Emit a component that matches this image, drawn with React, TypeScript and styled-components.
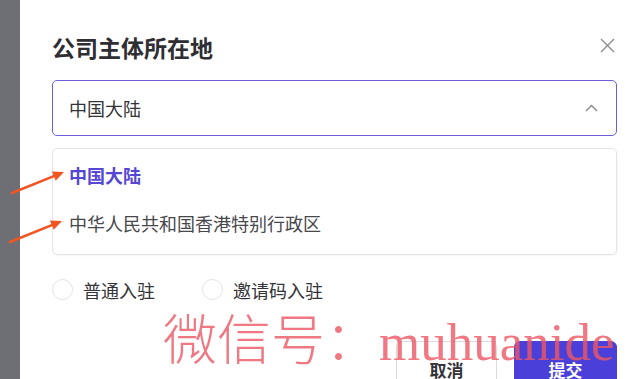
import React, { useState } from 'react';
import styled, { createGlobalStyle } from 'styled-components';

const GlobalStyle = createGlobalStyle`
  html, body {
    margin: 0;
    padding: 0;
    background: #ffffff;
    overflow: hidden;
  }
  * {
    box-sizing: border-box;
  }
`;

const Page = styled.div`
  position: relative;
  display: flex;
  width: 635px;
  height: 379px;
  overflow: hidden;
  font-family: "Noto Sans CJK SC", "Noto Sans", sans-serif;
`;

const Backdrop = styled.div`
  width: 20px;
  flex-shrink: 0;
  background: #6e6f75;
`;

const Dialog = styled.div`
  position: relative;
  flex: 1;
  background: #ffffff;
  padding: 32px 18px 0 32px;
  overflow: hidden;
`;

const Header = styled.div`
  display: flex;
  justify-content: space-between;
  align-items: center;
  height: 30px;
`;

const Title = styled.h2`
  margin: 0;
  font-size: 23px;
  line-height: 30px;
  font-weight: 600;
  color: #2e2e33;
`;

const CloseBtn = styled.span`
  display: flex;
  margin-right: 2px;
  margin-top: -4px;
  cursor: pointer;
`;

const Select = styled.div`
  margin-top: 18px;
  height: 56px;
  border: 1.5px solid #6d5fd8;
  border-radius: 5px;
  display: flex;
  align-items: center;
  justify-content: space-between;
  padding: 0 18px 0 16px;
  font-size: 18px;
  color: #333338;
`;

const Dropdown = styled.ul`
  list-style: none;
  margin: 12px 0 0;
  padding: 2px 0 7px;
  border: 1px solid #e4e4ec;
  border-radius: 5px;
  box-shadow: 1px 1px 2px rgba(0, 0, 0, 0.04);
`;

const Option = styled.li<{ $active?: boolean }>`
  height: 48px;
  display: flex;
  align-items: center;
  padding-left: 16px;
  font-size: 18px;
  font-weight: ${p => (p.$active ? 700 : 400)};
  color: ${p => (p.$active ? '#5546d4' : '#47474c')};
`;

const RadioRow = styled.div`
  margin-top: 24px;
  display: flex;
  align-items: center;
  gap: 47px;
`;

const RadioItem = styled.label`
  display: flex;
  align-items: center;
  gap: 10px;
  font-size: 18px;
  line-height: 20px;
  color: #333338;
`;

const RadioCircle = styled.span`
  width: 21px;
  height: 21px;
  border-radius: 50%;
  border: 1.5px solid #e2e2e6;
  background: #fff;
`;

const Footer = styled.div`
  margin-top: 41px;
  display: flex;
  justify-content: flex-end;
  gap: 17px;
`;

const Button = styled.button<{ $primary?: boolean }>`
  height: 46px;
  width: ${p => (p.$primary ? '103px' : '101px')};
  border-radius: 6px;
  border: 1px solid ${p => (p.$primary ? '#4a3fd8' : '#d9d9de')};
  background: ${p => (p.$primary ? '#4a3fd8' : '#ffffff')};
  color: ${p => (p.$primary ? '#ffffff' : '#333338')};
  font-family: "Noto Sans CJK SC", sans-serif;
  font-size: 17px;
  line-height: 24px;
  font-weight: 700;
  padding: 16px 0 0;
  display: flex;
  justify-content: center;
  align-items: flex-start;
`;

const Watermark = styled.div`
  position: absolute;
  left: 143px;
  top: 302px;
  white-space: nowrap;
  color: rgba(236, 86, 100, 0.8);
  font-size: 54px;
  line-height: 70px;
  pointer-events: none;
  display: flex;
  align-items: baseline;
`;

const WatermarkCn = styled.span`
  font-family: "Noto Sans CJK SC", sans-serif;
  font-weight: 200;
`;

const WatermarkEn = styled.span`
  font-family: "Liberation Serif", serif;
  font-weight: 400;
  font-size: 53px;
`;

const Arrows = styled.svg`
  position: absolute;
  left: 0;
  top: 0;
  pointer-events: none;
`;

function Arrow({ x1, y1, x2, y2 }: { x1: number; y1: number; x2: number; y2: number }) {
  const ang = Math.atan2(y2 - y1, x2 - x1);
  const len = 11;
  const w = 5;
  const bx = x2 - Math.cos(ang) * len;
  const by = y2 - Math.sin(ang) * len;
  const px = -Math.sin(ang) * w;
  const py = Math.cos(ang) * w;
  return (
    <g>
      <line x1={x1} y1={y1} x2={bx} y2={by} stroke="#f05522" strokeWidth={2.6} strokeLinecap="round" />
      <polygon points={`${x2},${y2} ${bx + px},${by + py} ${bx - px},${by - py}`} fill="#f05522" />
    </g>
  );
}

export default function App() {
  const [value] = useState('中国大陆');
  const options = ['中国大陆', '中华人民共和国香港特别行政区'];

  return (
    <Page>
      <GlobalStyle />
      <Backdrop />
      <Dialog>
        <Header>
          <Title>公司主体所在地</Title>
          <CloseBtn>
            <svg width="15" height="15" viewBox="0 0 15 15">
              <path d="M1 1 L14 14 M14 1 L1 14" stroke="#8c8c92" strokeWidth="1.4" fill="none" />
            </svg>
          </CloseBtn>
        </Header>
        <Select>
          <span>{value}</span>
          <svg width="13" height="8" viewBox="0 0 13 8">
            <path d="M1 7 L6.5 1.5 L12 7" stroke="#85858b" strokeWidth="1.4" fill="none" />
          </svg>
        </Select>
        <Dropdown>
          {options.map(o => (
            <Option key={o} $active={o === value}>
              {o}
            </Option>
          ))}
        </Dropdown>
        <RadioRow>
          <RadioItem>
            <RadioCircle />
            普通入驻
          </RadioItem>
          <RadioItem>
            <RadioCircle />
            邀请码入驻
          </RadioItem>
        </RadioRow>
        <Footer>
          <Button>取消</Button>
          <Button $primary>提交</Button>
        </Footer>
        <Watermark>
          <WatermarkCn>微信号：</WatermarkCn>
          <WatermarkEn>muhuanide</WatermarkEn>
        </Watermark>
      </Dialog>
      <Arrows width="100" height="260" viewBox="0 0 100 260">
        <Arrow x1={12} y1={193} x2={64} y2={172} />
        <Arrow x1={10} y1={242} x2={62} y2={221} />
      </Arrows>
    </Page>
  );
}
